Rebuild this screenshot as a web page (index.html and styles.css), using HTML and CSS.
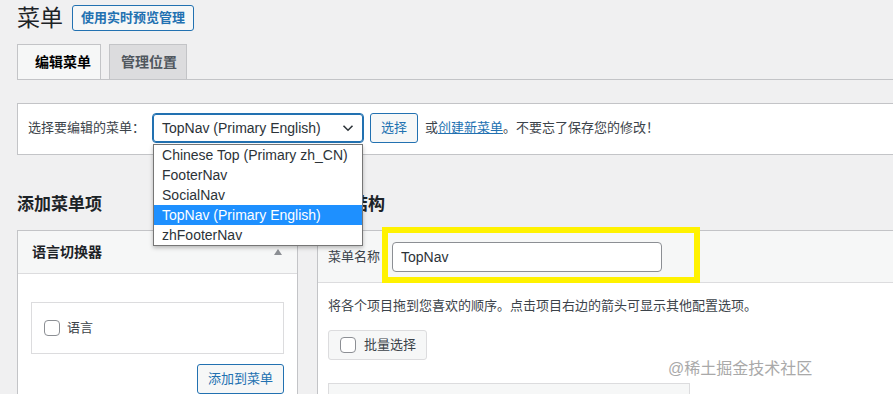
FILE: index.html
```html
<!DOCTYPE html>
<html lang="zh-CN">

<head>
    <meta charset="UTF-8">
    <meta name="viewport" content="width=device-width, initial-scale=1.0">
    <title>菜单</title>
    <link rel="stylesheet" href="styles.css">
</head>

<body>
    <div class="wrap">
        <!--标题-->
        <div class="page-head">
            <h1>菜单</h1>
            <a href="#" class="title-action">使用实时预览管理</a>
        </div>
        <!--选项卡-->
        <div class="tabs">
            <a href="#" class="tab tab-active">编辑菜单</a>
            <a href="#" class="tab">管理位置</a>
        </div>
        <!--选择菜单-->
        <div class="manage-box">
            <span class="manage-label">选择要编辑的菜单：</span>
            <div class="select-wrap">
                <div class="select">
                    TopNav (Primary English)
                    <svg class="chevron" width="12" height="8" viewBox="0 0 12 8">
                        <path d="M1.5 1.8 6 6.2 10.5 1.8" fill="none" stroke="#2c3338" stroke-width="1.6" />
                    </svg>
                </div>
                <ul class="select-list">
                    <li>Chinese Top (Primary zh_CN)</li>
                    <li>FooterNav</li>
                    <li>SocialNav</li>
                    <li class="selected">TopNav (Primary English)</li>
                    <li>zhFooterNav</li>
                </ul>
            </div>
            <a href="#" class="btn btn-select">选择</a>
            <span class="hint">或<a href="#">创建新菜单</a>。不要忘了保存您的修改！</span>
        </div>
        <!--两栏-->
        <div class="columns">
            <div class="col-left">
                <h2>添加菜单项</h2>
                <div class="panel">
                    <div class="panel-head">
                        语言切换器
                        <span class="arrow"></span>
                    </div>
                    <div class="panel-body">
                        <div class="lang-box">
                            <span class="cb"></span>
                            <span>语言</span>
                        </div>
                        <div class="panel-actions">
                            <a href="#" class="btn">添加到菜单</a>
                        </div>
                    </div>
                </div>
            </div>
            <div class="col-right">
                <h2>菜单结构</h2>
                <div class="panel">
                    <div class="menu-head">
                        <span>菜单名称</span>
                        <span class="name-field">
                            <input type="text" value="TopNav">
                        </span>
                    </div>
                    <div class="menu-body">
                        <p>将各个项目拖到您喜欢的顺序。点击项目右边的箭头可显示其他配置选项。</p>
                        <span class="bulk">
                            <span class="cb"></span>
                            <span>批量选择</span>
                        </span>
                        <div class="menu-list"></div>
                    </div>
                </div>
            </div>
        </div>
    </div>
    <div class="watermark">@稀土掘金技术社区</div>
</body>

</html>
```

FILE: styles.css
```css
* {
    margin: 0;
    padding: 0;
    box-sizing: border-box;
}

ul {
    list-style: none
}

html,
body {
    height: 100%;
    overflow: hidden;
}

body {
    background-color: #f0f0f1;
    color: #3c434a;
    font-family: "Liberation Sans", "Noto Sans CJK SC", sans-serif;
    font-size: 13px;
    line-height: 20px;
    position: relative;
}

a {
    color: #2271b1;
    text-decoration: none;
}

.wrap {
    padding-left: 17px;
    margin-right: -40px;
}

/* 标题 */
.page-head {
    display: flex;
    align-items: center;
    padding-top: 5px;
    height: 31px;
}

.page-head h1 {
    font-size: 23px;
    font-weight: 400;
    color: #1d2327;
    line-height: 26px;
    margin-right: 9px;
}

.title-action {
    display: inline-block;
    height: 26px;
    line-height: 24px;
    padding: 0 8px;
    border: 1px solid #2271b1;
    border-radius: 3px;
    background-color: #f6f7f7;
    font-weight: 600;
}

/* 选项卡 */
.tabs {
    display: flex;
    margin-top: 13px;
    border-bottom: 1px solid #c3c4c7;
}

.tab {
    display: block;
    height: 35px;
    line-height: 34px;
    padding: 0 9px 0 11px;
    margin-right: 8px;
    border: 1px solid #c3c4c7;
    border-bottom: none;
    background-color: #dcdcde;
    color: #50575e;
    font-size: 14px;
    font-weight: 600;
    white-space: nowrap;
}

.tab-active {
    padding-left: 17px;
    background-color: #f6f7f7;
    color: #000;
}

/* 选择菜单 */
.manage-box {
    display: flex;
    align-items: center;
    margin-top: 23px;
    padding: 9px 10px 11px;
    background-color: #fff;
    border: 1px solid #c3c4c7;
    border-right: none;
}

.manage-label {
    margin-right: 7px;
}

.select-wrap {
    position: relative;
}

.select {
    display: flex;
    align-items: center;
    justify-content: space-between;
    width: 212px;
    height: 30px;
    padding: 0 8px 0 9px;
    border: 1px solid #2271b1;
    border-radius: 4px;
    box-shadow: 0 0 0 1px #2271b1 inset;
    color: #2c3338;
    font-size: 14px;
    white-space: nowrap;
}

.chevron {
    margin-right: 1px;
}

.select-list {
    position: absolute;
    top: 31px;
    left: 1px;
    width: 210px;
    background-color: #fff;
    border: 1px solid #767676;
    box-shadow: 0 2px 4px rgba(0, 0, 0, 0.25);
    color: #2c3338;
    font-size: 14px;
    z-index: 10;
}

.select-list li {
    height: 20px;
    line-height: 20px;
    padding-left: 8px;
    white-space: nowrap;
}

.select-list li.selected {
    background-color: #1e90ff;
    color: #fff;
}

.btn {
    display: inline-block;
    height: 30px;
    line-height: 28px;
    padding: 0 10px;
    border: 1px solid #2271b1;
    border-radius: 3px;
    background-color: #f6f7f7;
    color: #2271b1;
    font-size: 13px;
}

.btn-select {
    width: 48px;
    margin-left: 6px;
    text-align: center;
    padding: 0;
}

.hint {
    margin-left: 7px;
}

.hint a {
    text-decoration: underline;
}

/* 两栏 */
.columns {
    display: flex;
    margin-top: 38px;
}

.columns h2 {
    font-size: 17px;
    font-weight: 600;
    color: #1d2327;
    line-height: 24px;
    margin-bottom: 13px;
}

.col-left {
    width: 281px;
    flex-shrink: 0;
}

.col-right {
    flex: 1;
    margin-left: 19px;
}

.panel {
    border: 1px solid #c3c4c7;
    background-color: #fff;
}

.panel-head {
    display: flex;
    align-items: center;
    justify-content: space-between;
    height: 43px;
    padding: 0 15px 0 14px;
    background-color: #f6f7f7;
    border-bottom: 1px solid #dcdcde;
    color: #1d2327;
    font-size: 14px;
    font-weight: 600;
}

.arrow {
    width: 0;
    height: 0;
    border-left: 4px solid transparent;
    border-right: 4px solid transparent;
    border-bottom: 6px solid #8c8f94;
}

.panel-body {
    padding: 28px 13px 20px;
}

.lang-box {
    display: flex;
    align-items: center;
    height: 52px;
    padding-left: 12px;
    border: 1px solid #dcdcde;
}

.cb {
    display: inline-block;
    width: 16px;
    height: 16px;
    margin-right: 7px;
    border: 1px solid #8c8f94;
    border-radius: 4px;
    background-color: #fff;
}

.panel-actions {
    margin-top: 10px;
    text-align: right;
}

.menu-head {
    display: flex;
    align-items: center;
    height: 52px;
    padding: 1px 10px 0;
    background-color: #f6f7f7;
    border-bottom: 1px solid #dcdcde;
}

.name-field {
    position: relative;
    margin-left: 12px;
}

.name-field::after {
    content: "";
    position: absolute;
    left: -10px;
    right: -38px;
    top: -15px;
    bottom: -11px;
    border: 6px solid #fff200;
}

.name-field input {
    display: block;
    width: 270px;
    height: 30px;
    padding: 0 8px;
    border: 1px solid #8c8f94;
    border-radius: 4px;
    font-family: inherit;
    font-size: 14px;
    color: #2c3338;
    outline: none;
}

.menu-body {
    padding: 13px 10px 0;
    height: 120px;
}

.bulk {
    display: inline-flex;
    align-items: center;
    height: 30px;
    margin-top: 14px;
    padding: 0 10px 0 11px;
    border: 1px solid #dcdcde;
    border-radius: 3px;
    background-color: #f6f7f7;
}

.bulk .cb {
    margin-right: 8px;
}

.menu-list {
    width: 362px;
    height: 40px;
    margin-top: 23px;
    border: 1px solid #dcdcde;
    background-color: #f6f7f7;
}

/* 水印 */
.watermark {
    position: absolute;
    left: 668px;
    top: 358px;
    font-size: 16px;
    line-height: 22px;
    color: #a9a9a9;
    text-shadow: 0 0 2px #fff;
}
```
